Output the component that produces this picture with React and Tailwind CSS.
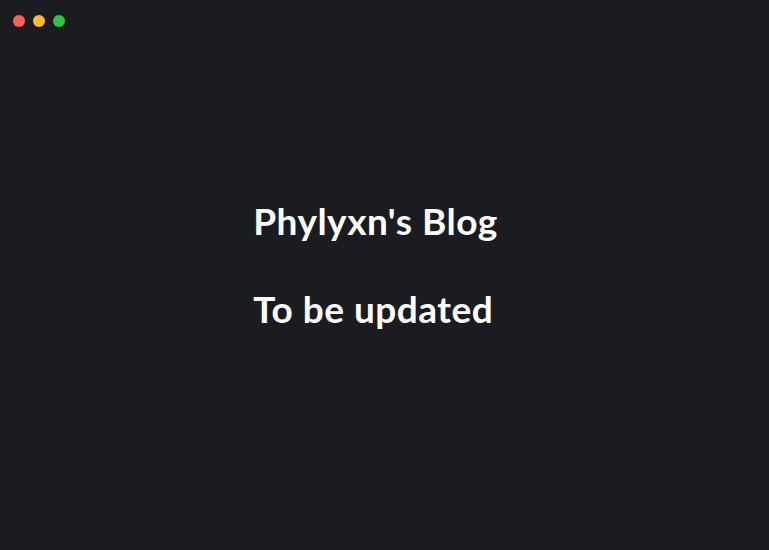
export default function App() {
	return (
		<div
			className="relative h-[550px] w-full bg-[#1b1c21] text-white overflow-hidden"
			style={{ fontFamily: 'Lato, "DejaVu Sans", sans-serif' }}
		>
			{/* window controls */}
			<div className="absolute left-[13px] top-[15px] flex gap-[8px]">
				<span className="h-[12px] w-[12px] rounded-full bg-[#ff5f57]" />
				<span className="h-[12px] w-[12px] rounded-full bg-[#febc2e]" />
				<span className="h-[12px] w-[12px] rounded-full bg-[#28c840]" />
			</div>

			<div className="flex h-full items-center justify-center pr-[18px]">
				<div className="flex flex-col gap-[40px] pb-[20px] text-[37px] font-bold leading-[48px] tracking-[0.5px]">
					<h1>Phylyxn's Blog</h1>
					<h1>To be updated</h1>
				</div>
			</div>
		</div>
	);
}
